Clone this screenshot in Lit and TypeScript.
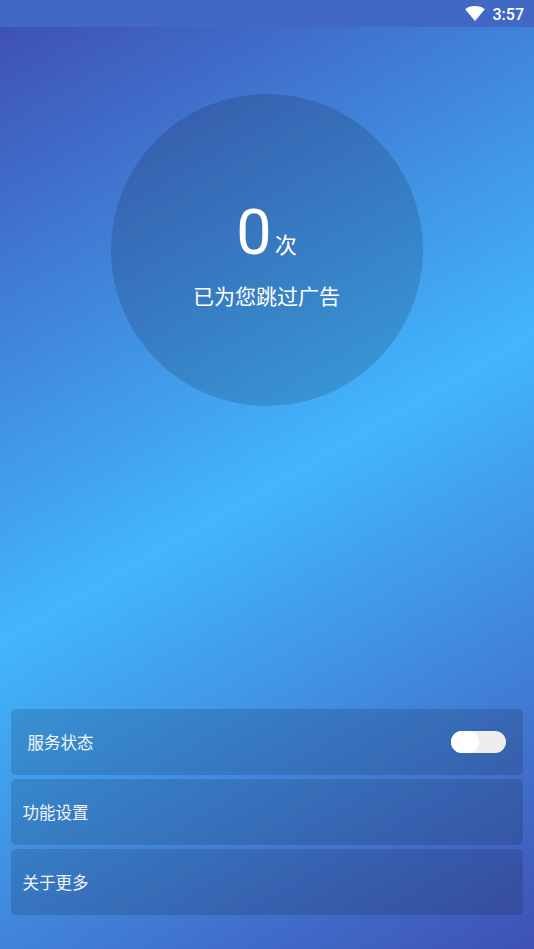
import { LitElement, html, css } from "lit";
import { customElement } from "lit/decorators.js";

@customElement("app-root")
export class AppRoot extends LitElement {
  static styles = css`
    :host {
      display: flex;
      flex-direction: column;
      width: 534px;
      height: 949px;
      overflow: hidden;
      font-family: "Roboto", "Noto Sans CJK SC", sans-serif;
      color: #fff;
    }
    .status {
      height: 27px;
      flex: none;
      display: flex;
      align-items: center;
      justify-content: flex-end;
      gap: 8px;
      padding: 1px 10px 0 0;
      box-sizing: border-box;
      background: #4168c4;
      font-size: 16px;
      font-weight: 500;
    }
    .wifi {
      width: 20px;
      height: 15px;
      display: block;
      margin-top: -1px;
    }
    .body {
      flex: 1;
      display: flex;
      flex-direction: column;
      min-height: 0;
      background: linear-gradient(150deg, #3f51b5 0%, #42b6fe 50%, #3f51b5 100%);
    }
    .circle {
      flex: none;
      align-self: center;
      width: 312px;
      height: 312px;
      margin-top: 67px;
      border-radius: 50%;
      background: rgba(0, 0, 0, 0.14);
      display: flex;
      flex-direction: column;
      align-items: center;
    }
    .count {
      display: flex;
      align-items: baseline;
      gap: 3px;
      margin-top: 104px;
      height: 70px;
      line-height: 70px;
    }
    .num {
      font-size: 63px;
    }
    .unit {
      font-size: 22px;
      margin-right: 1px;
      position: relative;
      top: -1px;
    }
    .label {
      margin-top: 14px;
      margin-right: 1px;
      font-size: 21px;
      line-height: 30px;
    }
    .list {
      margin-top: auto;
      padding: 0 11px 34px;
      display: flex;
      flex-direction: column;
      gap: 3.5px;
    }
    .row {
      height: 66.5px;
      border-radius: 5px;
      background: rgba(0, 0, 0, 0.14);
      display: flex;
      align-items: center;
      justify-content: space-between;
      padding: 0 17px 0 12px;
      font-size: 16.5px;
    }
    .row .text {
      color: #f2f6fb;
      margin-left: -0.5px;
    }
    .row.first {
      padding-left: 17px;
    }
    .toggle {
      width: 55px;
      height: 22px;
      border-radius: 11px;
      background: #eeeeee;
      display: flex;
    }
    .knob {
      width: 28px;
      height: 22px;
      border-radius: 11px;
      background: #fff;
    }
  `;

  render() {
    return html`
      <div class="status">
        <svg class="wifi" viewBox="0 0 21 16">
          <path d="M10.5 16 L0 3.4 C2.8 1.2 6.4 0 10.5 0 C14.6 0 18.2 1.2 21 3.4 Z" fill="#fff"></path>
        </svg>
        <span>3:57</span>
      </div>
      <div class="body">
        <div class="circle">
          <div class="count"><span class="num">0</span><span class="unit">次</span></div>
          <div class="label">已为您跳过广告</div>
        </div>
        <div class="list">
          <div class="row first">
            <span class="text">服务状态</span>
            <div class="toggle"><div class="knob"></div></div>
          </div>
          <div class="row"><span class="text">功能设置</span></div>
          <div class="row"><span class="text">关于更多</span></div>
        </div>
      </div>
    `;
  }
}
